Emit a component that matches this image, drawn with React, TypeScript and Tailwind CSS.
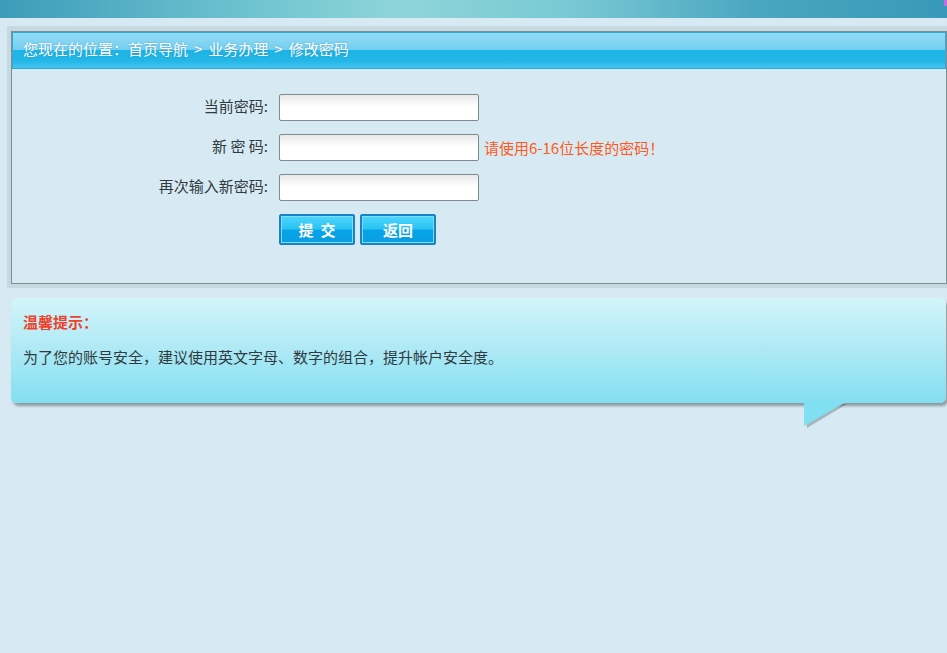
import React from 'react';

const font = { fontFamily: '"Microsoft YaHei", "Noto Sans CJK SC", "Noto Sans", sans-serif' };

const Field = ({ label, hint }: { label: string; hint?: string }) => (
  <div className="flex items-start h-[27px]">
    <label className="w-[256px] text-right text-[15px] leading-[17px] pt-[3px] text-[#2f3b40] whitespace-pre">{label}</label>
    <input
      type="password"
      className="ml-[11px] w-[200px] h-[27px] border border-[#7f8a8f] rounded-[2px] bg-[linear-gradient(to_bottom,#e9e9e9,#ffffff_45%,#ffffff)] outline-none"
    />
    {hint && <span className="ml-[5px] pt-[5px] text-[15px] leading-[17px] text-[#ff5a1e]">{hint}</span>}
  </div>
);

const Btn = ({ children }: { children: React.ReactNode }) => (
  <button className="w-[76px] h-[31px] border border-[#1a83c6] rounded-[2px] p-px bg-[#1a83c6]">
    <span className="flex items-center justify-center w-full h-full border border-[#7fdcfb] bg-[linear-gradient(to_bottom,#4ad4fb,#2ac3f3_48%,#05a5e8_52%,#0a9fe2)] text-white text-[15px] font-bold leading-none">
      {children}
    </span>
  </button>
);

export default function App() {
  return (
    <div className="relative min-h-[653px] bg-[#d7eaf3] overflow-hidden" style={font}>
      <div className="h-[18px] bg-[linear-gradient(to_right,#3d9cb9,#6cc1cf_25%,#8ed5d9_42%,#79c9d4_60%,#4aa6c0_80%,#3899b8)]" />
      <div className="absolute top-0 right-0 w-[3px] h-[6px] bg-[#c36fe3]" />

      {/* location + form */}
      <div className="mt-[8px] ml-[7px] bg-[#c6d9e0] pl-[4px] pt-[5px] pb-[4px]">
        <div className="border border-[#7e8e95] bg-[#d7eaf3]">
          <div className="h-[37px] border border-[#2fa9d7] bg-[linear-gradient(to_bottom,#92dcf5,#74cff1_48%,#1db4e5_50%,#23b7e7_80%,#45c4ee)] flex items-center pl-[10px] pb-[2px] text-white text-[15px] [text-shadow:0_0_2px_rgba(0,80,120,0.35)]">
            您现在的位置：首页导航<span className="mx-[6px]">&gt;</span>业务办理<span className="mx-[6px]">&gt;</span>修改密码
          </div>
          <div className="pt-[25px] pb-[38px] flex flex-col gap-[13px]">
            <Field label="当前密码:" />
            <Field label="新 密 码:" hint="请使用6-16位长度的密码！" />
            <Field label="再次输入新密码:" />
            <div className="flex gap-[5px] pl-[267px]">
              <Btn>提&nbsp;&nbsp;交</Btn>
              <Btn>返回</Btn>
            </div>
          </div>
        </div>
      </div>

      {/* tip box */}
      <div className="relative mt-[10px] ml-[11px] w-[935px]">
        <div className="h-[105px] rounded-[6px] bg-[linear-gradient(to_bottom,#d3f5fa,#ade9f5_50%,#82dff1)] shadow-[2px_3px_3px_rgba(0,0,0,0.35)] pl-[12px] pt-[15px]">
          <div className="text-[15px] leading-[17px] font-bold text-[#f0412a]">温馨提示：</div>
          <div className="mt-[18px] text-[15px] leading-[17px] text-[#2f3b40]">
            为了您的账号安全，建议使用英文字母、数字的组合，提升帐户安全度。
          </div>
        </div>
        <svg className="absolute left-[793px] top-[104px]" width="46" height="28" viewBox="0 0 46 28">
          <polygon points="1,2 43,2 3,26" fill="rgba(0,0,0,0.22)" />
          <polygon points="0,0 42,0 0,24" fill="#80dff1" />
        </svg>
      </div>
    </div>
  );
}
